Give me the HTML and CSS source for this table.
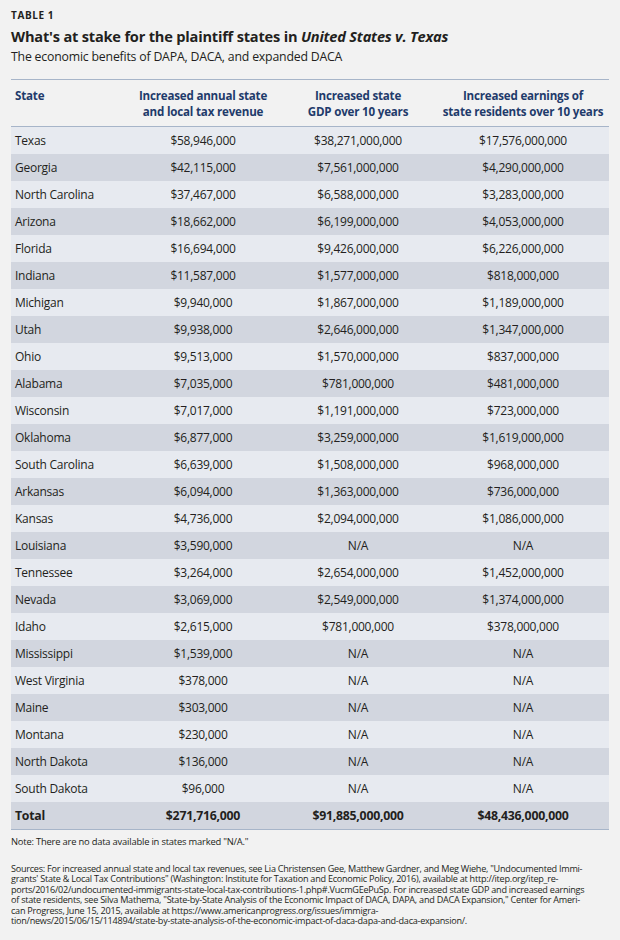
FILE: index.html
```html
<!DOCTYPE html>
<html>
<head>
<meta charset="utf-8">
<link rel="stylesheet" href="styles.css">
</head>
<body>
<div class="page">
  <div class="label">TABLE 1</div>
  <h1 class="title">What's at stake for the plaintiff states in <em>United States v. Texas</em></h1>
  <div class="subtitle">The economic benefits of DAPA, DACA, and expanded DACA</div>
  <table class="data">
    <colgroup><col class="c1"><col class="c2"><col class="c3"><col class="c4"></colgroup>
    <thead>
      <tr><th class="state">State</th><th>Increased annual state<br>and local tax revenue</th><th>Increased state<br>GDP over 10 years</th><th>Increased earnings of<br>state residents over 10 years</th></tr>
    </thead>
    <tbody>
      <tr><td>Texas</td><td>$58,946,000</td><td>$38,271,000,000</td><td>$17,576,000,000</td></tr>
      <tr><td>Georgia</td><td>$42,115,000</td><td>$7,561,000,000</td><td>$4,290,000,000</td></tr>
      <tr><td>North Carolina</td><td>$37,467,000</td><td>$6,588,000,000</td><td>$3,283,000,000</td></tr>
      <tr><td>Arizona</td><td>$18,662,000</td><td>$6,199,000,000</td><td>$4,053,000,000</td></tr>
      <tr><td>Florida</td><td>$16,694,000</td><td>$9,426,000,000</td><td>$6,226,000,000</td></tr>
      <tr><td>Indiana</td><td>$11,587,000</td><td>$1,577,000,000</td><td>$818,000,000</td></tr>
      <tr><td>Michigan</td><td>$9,940,000</td><td>$1,867,000,000</td><td>$1,189,000,000</td></tr>
      <tr><td>Utah</td><td>$9,938,000</td><td>$2,646,000,000</td><td>$1,347,000,000</td></tr>
      <tr><td>Ohio</td><td>$9,513,000</td><td>$1,570,000,000</td><td>$837,000,000</td></tr>
      <tr><td>Alabama</td><td>$7,035,000</td><td>$781,000,000</td><td>$481,000,000</td></tr>
      <tr><td>Wisconsin</td><td>$7,017,000</td><td>$1,191,000,000</td><td>$723,000,000</td></tr>
      <tr><td>Oklahoma</td><td>$6,877,000</td><td>$3,259,000,000</td><td>$1,619,000,000</td></tr>
      <tr><td>South Carolina</td><td>$6,639,000</td><td>$1,508,000,000</td><td>$968,000,000</td></tr>
      <tr><td>Arkansas</td><td>$6,094,000</td><td>$1,363,000,000</td><td>$736,000,000</td></tr>
      <tr><td>Kansas</td><td>$4,736,000</td><td>$2,094,000,000</td><td>$1,086,000,000</td></tr>
      <tr><td>Louisiana</td><td>$3,590,000</td><td>N/A</td><td>N/A</td></tr>
      <tr><td>Tennessee</td><td>$3,264,000</td><td>$2,654,000,000</td><td>$1,452,000,000</td></tr>
      <tr><td>Nevada</td><td>$3,069,000</td><td>$2,549,000,000</td><td>$1,374,000,000</td></tr>
      <tr><td>Idaho</td><td>$2,615,000</td><td>$781,000,000</td><td>$378,000,000</td></tr>
      <tr><td>Mississippi</td><td>$1,539,000</td><td>N/A</td><td>N/A</td></tr>
      <tr><td>West Virginia</td><td>$378,000</td><td>N/A</td><td>N/A</td></tr>
      <tr><td>Maine</td><td>$303,000</td><td>N/A</td><td>N/A</td></tr>
      <tr><td>Montana</td><td>$230,000</td><td>N/A</td><td>N/A</td></tr>
      <tr><td>North Dakota</td><td>$136,000</td><td>N/A</td><td>N/A</td></tr>
      <tr><td>South Dakota</td><td>$96,000</td><td>N/A</td><td>N/A</td></tr>
      <tr class="total"><td>Total</td><td>$271,716,000</td><td>$91,885,000,000</td><td>$48,436,000,000</td></tr>
    </tbody>
  </table>
  <div class="note">Note: There are no data available in states marked "N/A."</div>
  <div class="sources">Sources: For increased annual state and local tax revenues, see Lia Christensen Gee, Matthew Gardner, and Meg Wiehe, "Undocumented Immi-<br>grants' State &amp; Local Tax Contributions" (Washington: Institute for Taxation and Economic Policy, 2016), available at http://itep.org/itep_re-<br>ports/2016/02/undocumented-immigrants-state-local-tax-contributions-1.php#.VucmGEePuSp. For increased state GDP and increased earnings<br>of state residents, see Silva Mathema, "State-by-State Analysis of the Economic Impact of DACA, DAPA, and DACA Expansion," Center for Ameri-<br>can Progress, June 15, 2015, available at https://www.americanprogress.org/issues/immigra-<br>tion/news/2015/06/15/114894/state-by-state-analysis-of-the-economic-impact-of-daca-dapa-and-daca-expansion/.</div>
</div>
</body>
</html>
```

FILE: styles.css
```css
html, body {
  margin: 0;
  padding: 0;
  background: #f2f2f2;
}
.page {
  width: 620px;
  height: 940px;
  box-sizing: border-box;
  padding: 9px 11px 0 11px;
  font-family: "Open Sans", "Liberation Sans", sans-serif;
  color: #231f20;
}
.label {
  font-size: 10px;
  font-weight: 700;
  letter-spacing: 0.6px;
  line-height: 12px;
  color: #231f20;
}
.title {
  margin: 5px 0 0 0;
  font-size: 14.6px;
  line-height: 20px;
  font-weight: 700;
  letter-spacing: -0.2px;
}
.title em {
  font-style: italic;
}
.subtitle {
  margin-top: 2px;
  font-size: 12.3px;
  line-height: 17px;
  letter-spacing: -0.2px;
}
.data {
  margin-top: 14px;
  width: 598px;
  border-collapse: collapse;
  table-layout: fixed;
  font-size: 12px;
}
.c1 { width: 116px; }
.c2 { width: 152px; }
.c3 { width: 158px; }
.c4 { width: 172px; }
.data thead th {
  border-top: 1px solid #a7b5c9;
  border-bottom: 1px solid #a7b5c9;
  height: 47px;
  padding: 0;
  vertical-align: top;
  padding-top: 8px;
  font-size: 11.6px;
  line-height: 16px;
  font-weight: 700;
  color: #1f3b6b;
  text-align: center;
  letter-spacing: -0.2px;
  white-space: nowrap;
  box-sizing: border-box;
}
.data thead th.state {
  text-align: left;
  padding-left: 4px;
}
.data tbody td {
  height: 27px;
  padding: 0;
  text-align: center;
  vertical-align: middle;
  letter-spacing: -0.25px;
}
.data tbody td:first-child {
  text-align: left;
  padding-left: 4px;
}
.data tbody tr:nth-child(odd) td {
  background: #e7eaf0;
}
.data tbody tr:nth-child(even) td {
  background: #d2d6df;
}
.data tbody tr.total td {
  font-weight: 700;
  font-size: 12.3px;
  border-bottom: 1px solid #a7b5c9;
}
.note {
  margin-top: 6px;
  font-size: 9.4px;
  line-height: 12px;
  letter-spacing: -0.2px;
}
.sources {
  margin-top: 16px;
  font-size: 9.1px;
  line-height: 10.4px;
  letter-spacing: -0.25px;
  white-space: nowrap;
}
```
